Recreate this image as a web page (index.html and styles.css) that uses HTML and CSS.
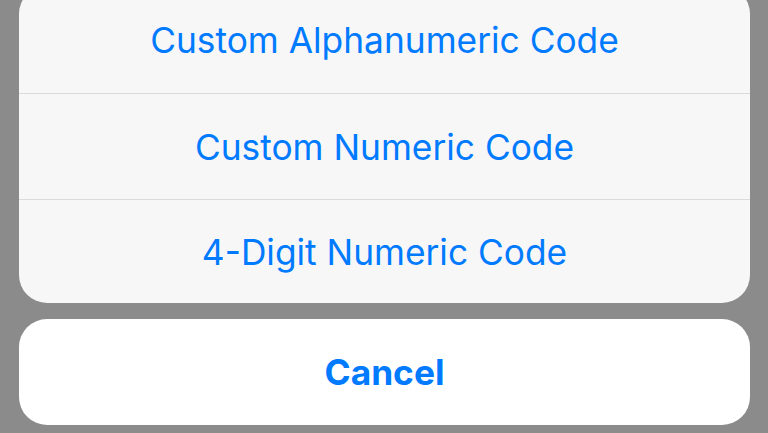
FILE: index.html
```html
<!DOCTYPE html>
<html>
<head>
<meta charset="utf-8">
<link rel="stylesheet" href="styles.css">
</head>
<body>
<div class="sheet">
  <div class="group">
    <div class="row">Custom Alphanumeric Code</div>
    <div class="row">Custom Numeric Code</div>
    <div class="row">4-Digit Numeric Code</div>
  </div>
  <div class="cancel">Cancel</div>
</div>
</body>
</html>
```
FILE: styles.css
```css
html, body {
  margin: 0;
  padding: 0;
  width: 768px;
  height: 433px;
  overflow: hidden;
  background: #8b8b8b;
  font-family: Inter, "Liberation Sans", Arial, sans-serif;
}
.sheet {
  display: flex;
  flex-direction: column;
  gap: 16px;
  margin-top: -14px;
  padding: 0 18px 0 19px;
}
.group {
  background: #f7f7f7;
  border-radius: 28px;
  overflow: hidden;
  display: flex;
  flex-direction: column;
}
.row {
  height: 106px;
  display: flex;
  align-items: center;
  justify-content: center;
  color: #007aff;
  font-size: 35.3px;
  padding-top: 2px;
  border-top: 1px solid #dbdbdb;
  box-sizing: border-box;
}
.row:first-child {
  border-top: none;
  height: 107px;
}
.row:last-child {
  height: 104px;
}
.cancel {
  height: 106px;
  background: #ffffff;
  border-radius: 28px;
  display: flex;
  align-items: center;
  justify-content: center;
  color: #007aff;
  font-size: 35.3px;
  font-weight: 700;
}
```
